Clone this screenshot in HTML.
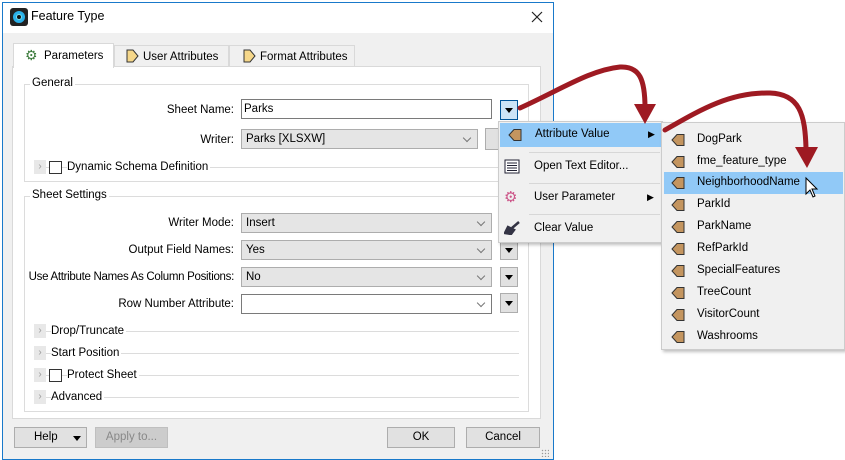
<!DOCTYPE html>
<html><head><style>
*{box-sizing:border-box;margin:0;padding:0}
body{width:845px;height:460px;background:#fff;font-family:"Liberation Sans",sans-serif;font-size:11.5px;color:#000;position:relative;overflow:hidden}
.a{position:absolute}
.lbl{position:absolute;text-align:right;white-space:nowrap}
.combo{position:absolute;height:20px;border:1px solid #adadad;background:#e5e5e5;padding:3px 0 0 4px}
.combo.w{background:#fff;border-color:#7a7a7a}
.combo:after{content:"";position:absolute;right:7px;top:5px;width:5px;height:5px;border-right:1px solid #777;border-bottom:1px solid #777;transform:rotate(45deg)}
.dd{position:absolute;width:18px;height:20px;border:1px solid #adadad;background:#e1e1e1}
.dd:after{content:"";position:absolute;left:4px;top:7px;border-left:4px solid transparent;border-right:4px solid transparent;border-top:5px solid #000}
.exp{position:absolute;width:12px;height:14px;background:#e8e8e8;color:#999;font-size:10px;text-align:center;line-height:14px}
.cb{position:absolute;width:13px;height:13px;border:1px solid #333;background:#fff}
.line{position:absolute;height:1px;background:#dcdcdc}
.tl{position:absolute;background:#fff;padding-right:2px}
.btn{position:absolute;height:21px;border:1px solid #adadad;background:#e1e1e1;text-align:center;padding-top:3px}
.mi{position:absolute;left:0;width:100%;height:24px}
.mi span{position:absolute;left:35px;top:5px}
.si{position:absolute;left:2px;width:179px;height:22px}
.si span{position:absolute;left:33px;top:4px}
</style></head><body>
<div class="a" style="left:2px;top:2px;width:552px;height:458px;border:1px solid #1979ca;background:#f0f0f0"></div>
<div class="a" style="left:3px;top:3px;width:550px;height:30px;background:#fff"></div>
<div class="a" style="left:10px;top:8px;width:18px;height:18px;background:#222;border-radius:3px"></div>
<div class="a" style="left:13px;top:11px;width:12px;height:12px;border-radius:50%;background:#2ab0e8"></div>
<div class="a" style="left:16px;top:14px;width:6px;height:6px;border-radius:50%;background:#111;border:1px solid #7de"></div>
<div class="a" style="left:31px;top:9px;font-size:12.5px">Feature Type</div>
<svg class="a" style="left:531px;top:11px" width="12" height="12"><path d="M1 1 11 11M11 1 1 11" stroke="#222" stroke-width="1.2"/></svg>
<div class="a" style="left:114px;top:45px;width:115px;height:22px;border:1px solid #d9d9d9;background:#f0f0f0"></div>
<div class="a" style="left:229px;top:45px;width:126px;height:22px;border:1px solid #d9d9d9;background:#f0f0f0"></div>
<div class="a" style="left:12px;top:66px;width:529px;height:353px;border:1px solid #d9d9d9;background:#fff"></div>
<div class="a" style="left:13px;top:43px;width:101px;height:25px;border:1px solid #d9d9d9;border-bottom:none;background:#fff"></div>
<div class="a" style="left:25px;top:47px;font-size:14px;color:#3a7a3a">⚙</div>
<div class="a" style="left:44px;top:50px">Parameters</div>
<svg class="a" style="left:125px;top:49px" width="14" height="14"><path d="M2 1h6l5 6-5 6H2z" fill="#f5d78a" stroke="#333"/></svg>
<div class="a" style="left:143px;top:51px">User Attributes</div>
<svg class="a" style="left:242px;top:49px" width="14" height="14"><path d="M2 1h6l5 6-5 6H2z" fill="#f5d78a" stroke="#333"/></svg>
<div class="a" style="left:260px;top:51px">Format Attributes</div>
<div class="a" style="left:24px;top:84px;width:505px;height:98px;border:1px solid #dcdcdc"></div>
<div class="a" style="left:30px;top:77px;background:#fff;padding:0 2px">General</div>
<div class="lbl" style="right:611px;top:104px">Sheet Name:</div>
<div class="a" style="left:241px;top:99px;width:251px;height:20px;border:1px solid #7a7a7a;background:#fff;padding:3px 0 0 2px">Parks</div>
<div class="dd" style="left:500px;top:100px;background:#cce4f7;border-color:#005499"></div>
<div class="lbl" style="right:611px;top:134px">Writer:</div>
<div class="combo" style="left:241px;top:129px;width:237px">Parks [XLSXW]</div>
<div class="a" style="left:485px;top:128px;width:20px;height:22px;border:1px solid #adadad;background:#e1e1e1"></div>
<div class="line" style="left:40px;top:167px;width:479px"></div>
<div class="exp" style="left:34px;top:160px">›</div>
<div class="cb" style="left:49px;top:161px"></div>
<div class="tl" style="left:67px;top:161px">Dynamic Schema Definition</div>
<div class="a" style="left:24px;top:196px;width:505px;height:216px;border:1px solid #dcdcdc"></div>
<div class="a" style="left:30px;top:189px;background:#fff;padding:0 2px">Sheet Settings</div>
<div class="lbl" style="right:611px;top:217px">Writer Mode:</div>
<div class="combo" style="left:241px;top:213px;width:251px">Insert</div>
<div class="lbl" style="right:611px;top:244px">Output Field Names:</div>
<div class="combo" style="left:241px;top:240px;width:251px">Yes</div>
<div class="dd" style="left:500px;top:240px"></div>
<div class="lbl" style="right:611px;top:271px;letter-spacing:-0.3px">Use Attribute Names As Column Positions:</div>
<div class="combo" style="left:241px;top:267px;width:251px">No</div>
<div class="dd" style="left:500px;top:267px"></div>
<div class="lbl" style="right:611px;top:298px">Row Number Attribute:</div>
<div class="combo w" style="left:241px;top:294px;width:251px"></div>
<div class="dd" style="left:500px;top:293px"></div>
<div class="line" style="left:40px;top:331px;width:479px"></div><div class="exp" style="left:34px;top:324px">›</div><div class="tl" style="left:51px;top:325px">Drop/Truncate</div>
<div class="line" style="left:40px;top:353px;width:479px"></div><div class="exp" style="left:34px;top:346px">›</div><div class="tl" style="left:51px;top:347px">Start Position</div>
<div class="line" style="left:40px;top:375px;width:479px"></div><div class="exp" style="left:34px;top:368px">›</div><div class="cb" style="left:49px;top:369px"></div><div class="tl" style="left:67px;top:369px">Protect Sheet</div>
<div class="line" style="left:40px;top:397px;width:479px"></div><div class="exp" style="left:34px;top:390px">›</div><div class="tl" style="left:51px;top:391px">Advanced</div>
<div class="btn" style="left:14px;top:427px;width:73px;text-align:left;padding-left:19px">Help<span style="position:absolute;left:58px;top:8px;border-left:4px solid transparent;border-right:4px solid transparent;border-top:5px solid #000"></span></div>
<div class="btn" style="left:95px;top:427px;width:73px;color:#888;background:#ccc;border-color:#bfbfbf">Apply to...</div>
<div class="btn" style="left:387px;top:427px;width:68px">OK</div>
<div class="btn" style="left:466px;top:427px;width:74px">Cancel</div>
<div class="a" style="left:498px;top:121px;width:165px;height:122px;border:1px solid #ccc;background:#f0f0f0;box-shadow:2px 2px 3px rgba(0,0,0,.25)">
 <div class="mi" style="top:1px;left:1px;width:161px;background:#91c9f7"><svg class="a" style="left:8px;top:5px" width="14" height="14"><path d="M1 7 6 1.5h7v11H6z" fill="#c4955f" stroke="#333"/></svg><span>Attribute Value</span><span style="left:148px;font-size:9px;top:6px">▶</span></div>
 <div class="line" style="left:30px;top:30px;width:131px;background:#d7d7d7"></div>
 <div class="mi" style="top:33px"><svg class="a" style="left:5px;top:4px" width="16" height="15"><rect x="1" y="1" width="14" height="13" fill="#fff" stroke="#223"/><path d="M3 4h10M3 6.5h10M3 9h10M3 11.5h10" stroke="#223"/></svg><span>Open Text Editor...</span></div>
 <div class="line" style="left:30px;top:61px;width:131px;background:#d7d7d7"></div>
 <div class="mi" style="top:64px"><div class="a" style="left:5px;top:2px;font-size:15px;color:#c58">⚙</div><span>User Parameter</span><span style="left:148px;font-size:9px;top:6px">▶</span></div>
 <div class="line" style="left:30px;top:92px;width:131px;background:#d7d7d7"></div>
 <svg class="a" style="left:5px;top:99px" width="16" height="14"><path d="M15 1 8 7M1 12l3-6 6 3-3 4z" stroke="#334" stroke-width="2.5" fill="#334"/></svg>
 <div class="a" style="left:35px;top:100px">Clear Value</div>
</div>
<div class="a" style="left:661px;top:122px;width:184px;height:228px;border:1px solid #ccc;background:#f0f0f0;box-shadow:2px 2px 3px rgba(0,0,0,.25)">
 <div class="si" style="top:6px"><svg class="a" style="left:7px;top:4px" width="14" height="14"><path d="M1 7 6 1.5h7v11H6z" fill="#c4955f" stroke="#333"/></svg><span>DogPark</span></div>
 <div class="si" style="top:28px"><svg class="a" style="left:7px;top:4px" width="14" height="14"><path d="M1 7 6 1.5h7v11H6z" fill="#c4955f" stroke="#333"/></svg><span>fme_feature_type</span></div>
 <div class="si" style="top:49px;background:#91c9f7"><svg class="a" style="left:7px;top:4px" width="14" height="14"><path d="M1 7 6 1.5h7v11H6z" fill="#c4955f" stroke="#333"/></svg><span>NeighborhoodName</span></div>
 <div class="si" style="top:71px"><svg class="a" style="left:7px;top:4px" width="14" height="14"><path d="M1 7 6 1.5h7v11H6z" fill="#c4955f" stroke="#333"/></svg><span>ParkId</span></div>
 <div class="si" style="top:93px"><svg class="a" style="left:7px;top:4px" width="14" height="14"><path d="M1 7 6 1.5h7v11H6z" fill="#c4955f" stroke="#333"/></svg><span>ParkName</span></div>
 <div class="si" style="top:115px"><svg class="a" style="left:7px;top:4px" width="14" height="14"><path d="M1 7 6 1.5h7v11H6z" fill="#c4955f" stroke="#333"/></svg><span>RefParkId</span></div>
 <div class="si" style="top:137px"><svg class="a" style="left:7px;top:4px" width="14" height="14"><path d="M1 7 6 1.5h7v11H6z" fill="#c4955f" stroke="#333"/></svg><span>SpecialFeatures</span></div>
 <div class="si" style="top:159px"><svg class="a" style="left:7px;top:4px" width="14" height="14"><path d="M1 7 6 1.5h7v11H6z" fill="#c4955f" stroke="#333"/></svg><span>TreeCount</span></div>
 <div class="si" style="top:181px"><svg class="a" style="left:7px;top:4px" width="14" height="14"><path d="M1 7 6 1.5h7v11H6z" fill="#c4955f" stroke="#333"/></svg><span>VisitorCount</span></div>
 <div class="si" style="top:203px"><svg class="a" style="left:7px;top:4px" width="14" height="14"><path d="M1 7 6 1.5h7v11H6z" fill="#c4955f" stroke="#333"/></svg><span>Washrooms</span></div>
</div>
<svg class="a" style="left:0;top:0" width="845" height="460">
 <g fill="none" stroke="#9e1a22" stroke-width="5" stroke-linecap="round">
  <path d="M520 108 C560 90 590 70 620 67 C640 66 645 80 645 108"/>
  <path d="M665 130 C700 110 730 92 770 93 C800 94 805 115 806 148"/>
 </g>
 <path d="M634 104 L656 104 L645 124 Z" fill="#9e1a22"/>
 <path d="M795 147 L818 147 L807 168 Z" fill="#9e1a22"/>
 <path d="M806 178 v16 l4-4 3 7 2-1-3-7h5z" fill="#fff" stroke="#000"/>
</svg>
<div class="a" style="left:541px;top:449px;width:8px;height:8px;background:radial-gradient(#999 30%,transparent 40%) 0 0/3px 3px"></div>
</body></html>
